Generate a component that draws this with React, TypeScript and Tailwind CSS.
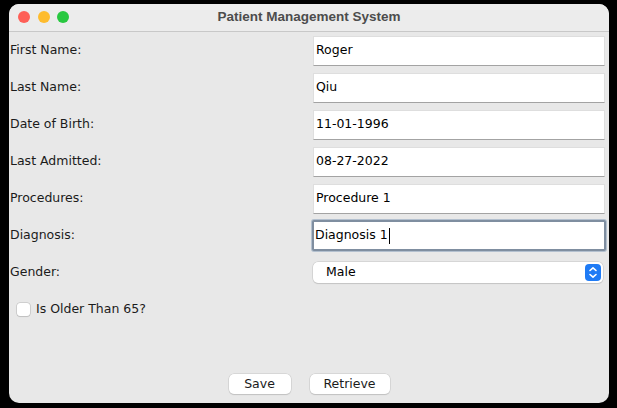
const fields = [
  { label: "First Name:", value: "Roger" },
  { label: "Last Name:", value: "Qiu" },
  { label: "Date of Birth:", value: "11-01-1996" },
  { label: "Last Admitted:", value: "08-27-2022" },
  { label: "Procedures:", value: "Procedure 1" },
  { label: "Diagnosis:", value: "Diagnosis 1", focused: true },
];

const font = { fontFamily: '"DejaVu Sans", "Liberation Sans", sans-serif' };

const App = () => {
  return (
    <div className="w-[617px] h-[408px] bg-black pt-[4px] pl-[9px]" style={font}>
      <div className="w-[600px] h-[399px] rounded-[10px] overflow-hidden bg-[#e8e8e8] flex flex-col">
        {/* Title bar */}
        <div className="relative h-[28px] shrink-0 bg-[#ececec] border-b border-[#c8c8c8] flex items-center justify-center">
          <div className="absolute left-[9px] top-[7px] flex gap-[7.5px]">
            <span className="w-[12px] h-[12px] rounded-full bg-[#fe5f57]" />
            <span className="w-[12px] h-[12px] rounded-full bg-[#febc2e]" />
            <span className="w-[12px] h-[12px] rounded-full bg-[#28c840]" />
          </div>
          <span
            className="text-[13.5px] font-bold text-[#4c4c4c]"
            style={{ fontFamily: '"Liberation Sans", Arial, sans-serif' }}
          >
            Patient Management System
          </span>
        </div>

        {/* Form rows */}
        {fields.map((f) => (
          <div key={f.label} className="grid grid-cols-2 items-center h-[37px] shrink-0">
            <span className="pl-[1px] text-[12.5px] text-[#1b1b1b]">{f.label}</span>
            {f.focused ? (
              <div className="ml-[3px] mr-[3px] h-[31px] bg-white border-[2px] border-[#7f8ea0] rounded-[2px] shadow-[0_0_0_1px_#b3c0cf] flex items-center pl-[1px] text-[12.5px] text-black">
                {f.value}
                <span className="ml-[1px] w-px h-[16px] bg-black" />
              </div>
            ) : (
              <div className="ml-[4px] mr-[4px] h-[30px] bg-white border-t border-x border-[#dedede] border-b border-b-[#a3a3a3] flex items-center pl-[2px] text-[12.5px] text-black">
                {f.value}
              </div>
            )}
          </div>
        ))}

        {/* Gender */}
        <div className="grid grid-cols-2 items-center h-[37px] shrink-0">
          <span className="pl-[1px] text-[12.5px] text-[#1b1b1b]">Gender:</span>
          <div className="ml-[4px] mr-[6px] h-[21px] bg-white rounded-[5px] shadow-[0_0_0_0.5px_#c4c4c4,0_1px_1px_rgba(0,0,0,0.15)] flex items-center justify-between pl-[13px] pr-[2px] text-[12.5px] text-black">
            <span>Male</span>
            <span className="w-[16px] h-[17px] rounded-[4px] bg-[#1f7bf5] flex items-center justify-center">
              <svg width="10" height="13" viewBox="0 0 10 13" fill="none" stroke="white" strokeWidth="1.6" strokeLinecap="round" strokeLinejoin="round">
                <path d="M2 4.5 L5 1.8 L8 4.5" />
                <path d="M2 8.5 L5 11.2 L8 8.5" />
              </svg>
            </span>
          </div>
        </div>

        {/* Checkbox */}
        <div className="flex items-center h-[37px] shrink-0 pl-[8px] gap-[6px]">
          <span className="w-[13px] h-[13px] rounded-[3px] bg-white shadow-[0_0_0_0.5px_#b5b5b5,0_1px_1px_rgba(0,0,0,0.12)]" />
          <span className="text-[12.5px] text-[#1b1b1b]">Is Older Than 65?</span>
        </div>

        <div className="flex-1" />

        {/* Buttons */}
        <div className="flex justify-center gap-[19px] pb-[9px]">
          <button className="w-[62px] h-[20px] bg-white rounded-[5px] shadow-[0_0_0_0.5px_#c6c6c6,0_1px_1px_rgba(0,0,0,0.18)] text-[12.5px] text-[#1b1b1b] leading-none">
            Save
          </button>
          <button className="w-[80px] h-[20px] bg-white rounded-[5px] shadow-[0_0_0_0.5px_#c6c6c6,0_1px_1px_rgba(0,0,0,0.18)] text-[12.5px] text-[#1b1b1b] leading-none">
            Retrieve
          </button>
        </div>
      </div>
    </div>
  );
};

export default App;
